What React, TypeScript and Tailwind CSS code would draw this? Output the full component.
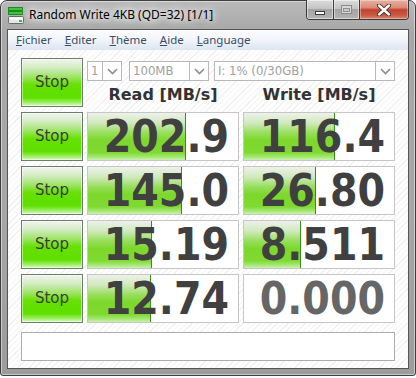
import React from 'react'

const rows = [
  { read: '202.9', rw: 98, write: '116.4', ww: 91 },
  { read: '145.0', rw: 94, write: '26.80', ww: 72 },
  { read: '15.19', rw: 64, write: '8.511', ww: 57 },
  { read: '12.74', rw: 63, write: '0.000', ww: 0 },
]

const menu = [
  { key: 'F', rest: 'ichier' },
  { key: 'E', rest: 'diter' },
  { key: 'T', rest: 'hème' },
  { key: 'A', rest: 'ide' },
  { key: 'L', rest: 'anguage' },
]

function AppIcon() {
  return (
    <svg width="16" height="18" viewBox="0 0 16 18">
      <rect x="0.5" y="0.5" width="14" height="3" fill="#41c441" stroke="#1f8a1f" />
      <rect x="0.5" y="4.5" width="14" height="3" fill="#41c441" stroke="#1f8a1f" />
      <rect x="0.5" y="9.5" width="15" height="7" rx="1" fill="#e6e6e6" stroke="#6a6a6a" />
      <rect x="1.5" y="10.5" width="13" height="2" fill="#ffffff" />
      <rect x="11" y="13" width="3" height="2" fill="#2fbf2f" />
    </svg>
  )
}

function Chevron() {
  return (
    <svg width="11" height="7" viewBox="0 0 11 7">
      <polyline points="1,1 5.5,5.5 10,1" fill="none" stroke="#8c8c8c" strokeWidth="1.6" />
    </svg>
  )
}

function Combo({ text, className }: { text: string; className: string }) {
  return (
    <div className={`flex h-[20px] border border-[#b8b8b8] bg-white ${className}`}>
      <div className="flex-1 pl-[3px] text-[13px] leading-[18px] text-[#a0a0a0] font-stretch-condensed whitespace-nowrap overflow-hidden">
        {text}
      </div>
      <div className="w-[19px] border-l border-[#b8b8b8] flex items-center justify-center">
        <Chevron />
      </div>
    </div>
  )
}

function StopButton() {
  return (
    <div className="h-[49px] border border-[#6e7e6e] shadow-[inset_0_0_0_1px_rgba(255,255,255,0.45)] bg-[linear-gradient(to_bottom,#f2f4f0_0%,#d4ecc4_18%,#9ee466_38%,#66e000_55%,#5fe000_82%,#98ee5c_92%,#dcf8c8_100%)] flex items-center justify-center">
      <span className="text-[15px] text-[#3c3c3c] font-['Comic_Sans_MS','DejaVu_Sans',sans-serif]">Stop</span>
    </div>
  )
}

function ValueBox({ value, fill, dim }: { value: string; fill: number; dim?: boolean }) {
  return (
    <div className="relative h-[49px] border border-[#c6c6c6] bg-white overflow-hidden">
      {fill > 0 && (
        <div
          className="absolute left-0 top-0 bottom-0 border-r border-[#3b8c1e] bg-[linear-gradient(to_bottom,#eef2ea_0%,#cfe9bb_22%,#98de5c_42%,#7dd82c_58%,#7fd930_84%,#a6e878_94%,#ccf2b0_100%)]"
          style={{ width: fill }}
        />
      )}
      <div
        className={`relative h-full flex items-center justify-end pr-[9px] font-bold text-[44px] leading-none font-stretch-condensed ${
          dim ? 'text-[#666666]' : 'text-[#404040]'
        }`}
      >
        {value}
      </div>
    </div>
  )
}

export default function App() {
  return (
    <div className="w-[416px] h-[378px] bg-white font-['DejaVu_Sans_Condensed','DejaVu_Sans',sans-serif]">
      <div className="relative w-[416px] h-[376px] border border-[#3e3e3e] rounded-t-[7px] rounded-b-[3px] bg-[linear-gradient(to_bottom,#b9b9b9_0%,#a8a8a8_8%,#a6a6a6_60%,#9c9c9c_100%)] shadow-[inset_0_0_0_1px_rgba(255,255,255,0.45)] px-[6px] pb-[6px] flex flex-col">
        {/* title bar */}
        <div className="h-[28px] flex items-start">
          <div className="ml-[1px] mt-[6px]">
            <AppIcon />
          </div>
          <span className="ml-[5px] mt-[6px] text-[12px] leading-[16px] text-black font-['Segoe_UI','Noto_Sans',sans-serif] [text-shadow:0_0_6px_#ffffff,0_0_10px_#ffffff,0_0_14px_#ffffff]">
            Random Write 4KB (QD=32) [1/1]
          </span>
          <div className="ml-auto -mt-[1px] flex h-[20px] border border-t-0 border-[#3a3a3a] rounded-b-[4px] overflow-hidden">
            <div className="w-[27px] border-r border-[#3a3a3a] bg-[linear-gradient(to_bottom,#dcdcdc_0%,#c4c4c4_45%,#a4a4a4_50%,#b4b4b4_100%)] shadow-[inset_0_0_0_1px_rgba(255,255,255,0.5)] flex items-end justify-center pb-[4px]">
              <div className="w-[10px] h-[4px] bg-white border border-[#3a3a3a]" />
            </div>
            <div className="w-[26px] border-r border-[#3a3a3a] bg-[linear-gradient(to_bottom,#dcdcdc_0%,#c4c4c4_45%,#a4a4a4_50%,#b4b4b4_100%)] shadow-[inset_0_0_0_1px_rgba(255,255,255,0.5)] flex items-center justify-center">
              <div className="w-[11px] h-[9px] border border-[#8a8a8a] bg-[#d8d8d8] flex items-center justify-center">
                <div className="w-[7px] h-[4px] border border-[#909090] bg-[#c8c8c8]" />
              </div>
            </div>
            <div className="w-[48px] bg-[linear-gradient(to_bottom,#e8b0a2_0%,#d98a76_40%,#c4412c_52%,#c85a44_80%,#d98672_100%)] shadow-[inset_0_0_0_1px_rgba(255,255,255,0.35)] flex items-center justify-center">
              <svg width="14" height="12" viewBox="0 0 14 12">
                <path d="M2 1.5 L12 10.5 M12 1.5 L2 10.5" stroke="#3a2a28" strokeWidth="4.2" strokeLinecap="round" />
                <path d="M2 1.5 L12 10.5 M12 1.5 L2 10.5" stroke="#ffffff" strokeWidth="2.4" strokeLinecap="round" />
              </svg>
            </div>
          </div>
        </div>

        {/* inner panel */}
        <div className="flex-1 border border-[#555555] flex flex-col">
          <div className="h-[20px] flex items-center gap-[13px] pl-[8px] bg-[linear-gradient(to_bottom,#fbfcfe_0%,#f1f5fa_50%,#dce5f1_100%)] text-[11.5px] text-[#3a4d68] font-['Segoe_UI','Noto_Sans',sans-serif]">
            {menu.map((m) => (
              <span key={m.key}>
                <span className="underline">{m.key}</span>
                {m.rest}
              </span>
            ))}
          </div>

          <div className="flex-1 pt-[8px] px-[13px] bg-[repeating-linear-gradient(135deg,#ffffff_0px,#ffffff_3px,#f1f1f1_3px,#f1f1f1_4px)]">
            <div className="grid grid-cols-[62px_152px_152px] gap-x-[4px] gap-y-[5px]">
              <StopButton />
              <div className="col-span-2 flex flex-col">
                <div className="mt-[3px] flex">
                  <Combo text="1" className="w-[35px]" />
                  <Combo text="100MB" className="w-[80px] ml-[7px]" />
                  <Combo text="I: 1% (0/30GB)" className="flex-1 ml-[5px]" />
                </div>
                <div className="grid grid-cols-[152px_152px] gap-x-[4px] h-[26px] items-center">
                  <div className="text-center font-bold text-[16px] leading-none text-[#333333] font-['DejaVu_Sans',sans-serif] pt-[2px]">
                    Read [MB/s]
                  </div>
                  <div className="text-center font-bold text-[16px] leading-none text-[#333333] font-['DejaVu_Sans',sans-serif] pt-[2px]">
                    Write [MB/s]
                  </div>
                </div>
              </div>

              {rows.map((r) => (
                <React.Fragment key={r.read}>
                  <StopButton />
                  <ValueBox value={r.read} fill={r.rw} />
                  <ValueBox value={r.write} fill={r.ww} dim={r.ww === 0} />
                </React.Fragment>
              ))}

              <div className="col-span-3 mt-[4px] h-[29px] border border-[#acacac] bg-white" />
            </div>
          </div>
        </div>
      </div>
    </div>
  )
}
